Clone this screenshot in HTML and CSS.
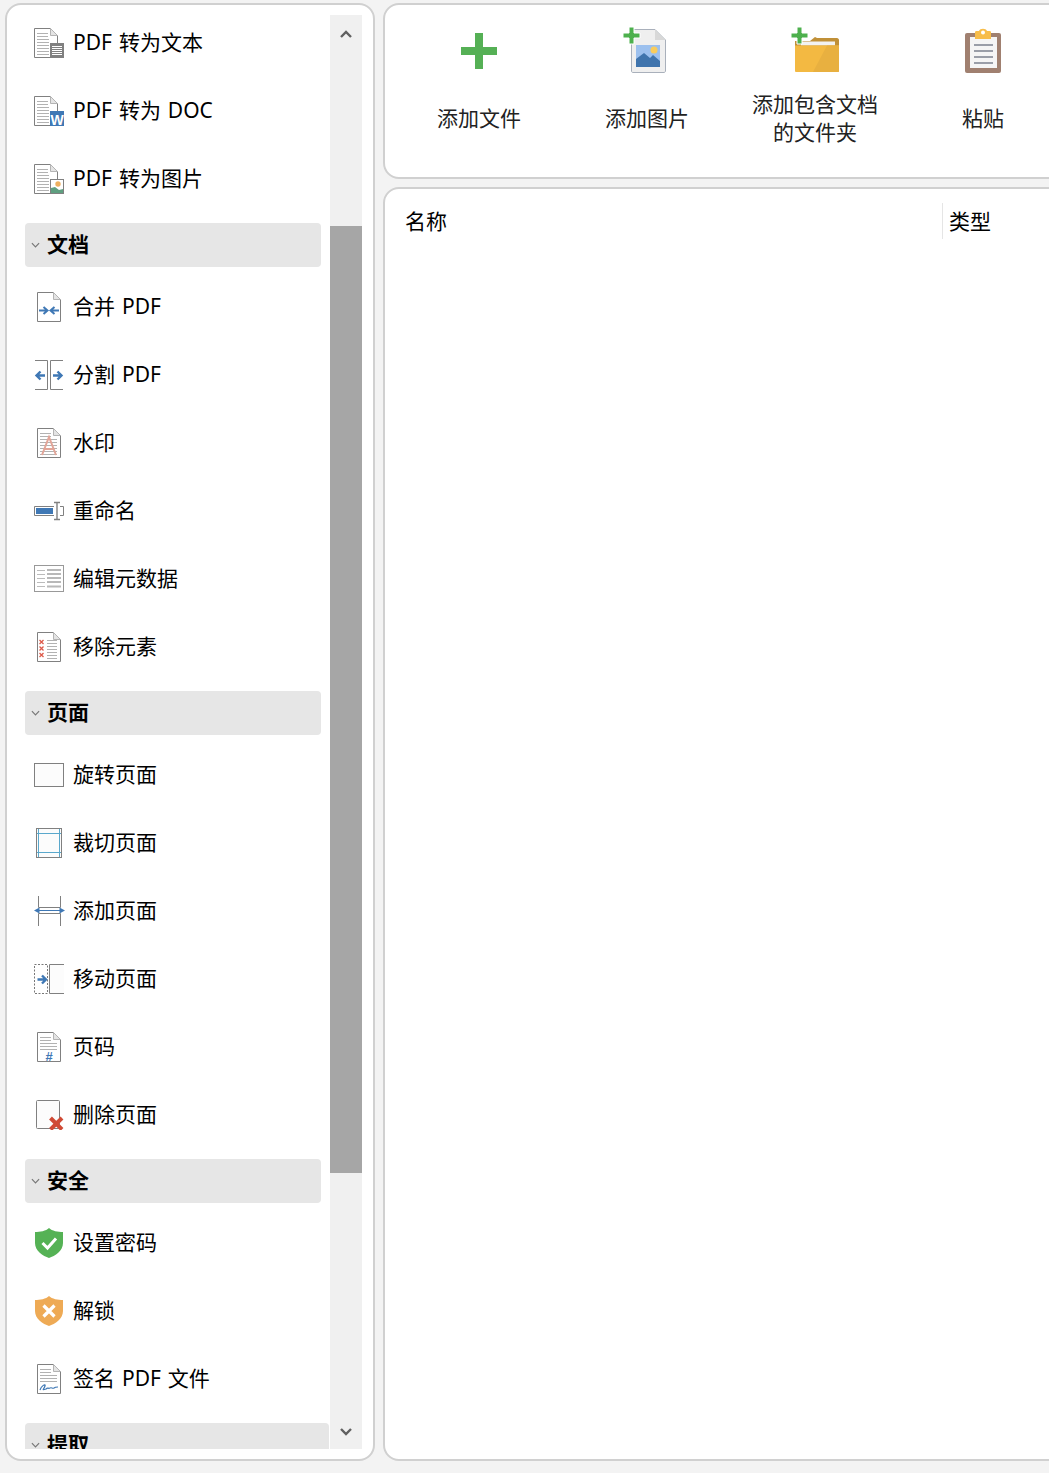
FILE: index.html
```html
<!DOCTYPE html>
<html lang="zh-CN">
<head>
    <meta charset="UTF-8">
    <meta name="viewport" content="width=device-width, initial-scale=1.0">
    <title>PDF 工具</title>
    <link rel="stylesheet" href="styles.css">
</head>
<body>
    <!-- 图标共用部分 -->
    <svg class="icon-defs">
        <defs>
            <g id="doc">
                <path d="M.5 .5H16.5L23.5 7.5V29.5H.5Z" fill="#fff" stroke="#808080"/>
                <path d="M16.5 .5V7.5H23.5Z" fill="#e4e4e4" stroke="#b4b4b4"/>
            </g>
            <path id="doc-lines" d="M3 5.5H14M3 8.5H14M3 11.5H20M3 14.5H20M3 17.5H20M3 20.5H20M3 23.5H20M3 26.5H20" stroke="#b2b2b2" fill="none"/>
            <path id="doc-lines-short" d="M3 5.5H14M3 8.5H14M3 11.5H15M3 14.5H15M3 17.5H15M3 20.5H15M3 23.5H15M3 26.5H15" stroke="#b2b2b2" fill="none"/>
        </defs>
    </svg>

    <!-- 左侧工具列表 -->
    <aside class="side-panel">
        <div class="tool-list">
            <ul class="tools tools-first">
                <li class="tool">
                    <svg class="tool-icon" viewBox="0 0 32 32"><use href="#doc" x="1" y="2"/><use href="#doc-lines-short" x="1" y="2"/><rect x="17" y="17" width="14" height="15" fill="#808080"/><path d="M19 20.500H29M19 22.500H29M19 24.500H29M19 26.500H29M19 28.500H29" stroke="#fff"/></svg>
                    <span>PDF 转为文本</span>
                </li>
                <li class="tool">
                    <svg class="tool-icon" viewBox="0 0 32 32"><use href="#doc" x="1" y="2"/><use href="#doc-lines-short" x="1" y="2"/><rect x="17" y="17" width="14" height="15" fill="#3f78b5"/><text class="badge-w" x="24" y="30.500">W</text></svg>
                    <span>PDF 转为 DOC</span>
                </li>
                <li class="tool">
                    <svg class="tool-icon" viewBox="0 0 32 32"><use href="#doc" x="1" y="2"/><use href="#doc-lines-short" x="1" y="2"/><rect x="17.500" y="17.500" width="13" height="14" fill="#fff" stroke="#808080"/><circle cx="25" cy="22" r="2.700" fill="#eeb060"/><path d="M18 31V26L22 25L26 28L30 27V31Z" fill="#5f9f80"/></svg>
                    <span>PDF 转为图片</span>
                </li>
            </ul>

            <div class="group-title">
                <svg class="chevron" viewBox="0 0 10 6"><path d="M1 1L5 5L9 1" fill="none" stroke="#777" stroke-width="1.300"/></svg>
                <span>文档</span>
            </div>
            <ul class="tools">
                <li class="tool">
                    <svg class="tool-icon" viewBox="0 0 32 32"><use href="#doc" x="4" y="2"/><path d="M6 20.500H14M10.500 17L14.500 20.500L10.500 24M26 20.500H18M21.500 17L17.500 20.500L21.500 24" fill="none" stroke="#3f78b5" stroke-width="2"/></svg>
                    <span>合并 PDF</span>
                </li>
                <li class="tool">
                    <svg class="tool-icon" viewBox="0 0 32 32"><path d="M2 2.500H14.500V31.500H2M30 2.500H17.500V31.500H30" fill="#fff" stroke="#808080"/><path d="M12 17.500H4M7.500 13.500L3.500 17.500L7.500 21.500M20 17.500H28M24.500 13.500L28.500 17.500L24.500 21.500" fill="none" stroke="#3f78b5" stroke-width="2.400"/></svg>
                    <span>分割 PDF</span>
                </li>
                <li class="tool">
                    <svg class="tool-icon" viewBox="0 0 32 32"><use href="#doc" x="4" y="2"/><use href="#doc-lines" x="4" y="2"/><path d="M9 29L16 11L23 29M11.500 23H20.500" fill="none" stroke="#e2a598" stroke-width="2"/></svg>
                    <span>水印</span>
                </li>
                <li class="tool">
                    <svg class="tool-icon" viewBox="0 0 32 32"><path d="M21 12.500H1.500V21.500H21M27 12.500H30.500V21.500H27" fill="#fff" stroke="#808080"/><rect x="3" y="14" width="17" height="6" fill="#3f78b5"/><path d="M21 8.500H27M24 8.500V25.500M21 25.500H27" fill="none" stroke="#808080" stroke-width="1.400"/></svg>
                    <span>重命名</span>
                </li>
                <li class="tool">
                    <svg class="tool-icon" viewBox="0 0 32 32"><rect x="1.500" y="3.500" width="29" height="26" fill="#fff" stroke="#999"/><path d="M4 8.500H12M4 12.500H12M4 16.500H12M4 20.500H12M4 24.500H12" stroke="#bbb"/><path d="M14 8H28M14 12H28M14 16H28M14 20H28M14 24.500H28" stroke="#b8b8b8" stroke-width="2"/></svg>
                    <span>编辑元数据</span>
                </li>
                <li class="tool">
                    <svg class="tool-icon" viewBox="0 0 32 32"><use href="#doc" x="4" y="2"/><path d="M14 10.500H24M14 13.500H24M14 16.500H24M14 19.500H24M14 22.500H24M14 25.500H24M14 28.500H24" stroke="#b2b2b2"/><path d="M6.500 10L10.500 14M10.500 10L6.500 14M6.500 16.500L10.500 20.500M10.500 16.500L6.500 20.500M6.500 23L10.500 27M10.500 23L6.500 27" stroke="#dd5a4a" stroke-width="1.300"/></svg>
                    <span>移除元素</span>
                </li>
            </ul>

            <div class="group-title">
                <svg class="chevron" viewBox="0 0 10 6"><path d="M1 1L5 5L9 1" fill="none" stroke="#777" stroke-width="1.300"/></svg>
                <span>页面</span>
            </div>
            <ul class="tools">
                <li class="tool">
                    <svg class="tool-icon" viewBox="0 0 32 32"><rect x="1.500" y="5.500" width="29" height="23" fill="#fcfcfc" stroke="#808080"/></svg>
                    <span>旋转页面</span>
                </li>
                <li class="tool">
                    <svg class="tool-icon" viewBox="0 0 32 32"><rect x="3.500" y="2.500" width="25" height="29" fill="#fcfcfc" stroke="#808080"/><path d="M5.500 3V31M26.500 3V31M4 7.500H28M4 26.500H28" stroke="#5aa8cc"/></svg>
                    <span>裁切页面</span>
                </li>
                <li class="tool">
                    <svg class="tool-icon" viewBox="0 0 32 32"><path d="M5.500 2V13.500H27.500V2M5.500 32V19.500H27.500V32" fill="none" stroke="#808080"/><path d="M4 16.500H28" stroke="#3f78b5"/><path d="M1 16.500L6.500 13.500V19.500ZM32 16.500L26.500 13.500V19.500Z" fill="#3f78b5"/></svg>
                    <span>添加页面</span>
                </li>
                <li class="tool">
                    <svg class="tool-icon" viewBox="0 0 32 32"><rect x="1.500" y="2.500" width="13" height="29" fill="none" stroke="#777" stroke-dasharray="2 1.500"/><path d="M31 2.500H16.500V31.500H31" fill="#fcfcfc" stroke="#808080"/><path d="M4.500 17.500H12.500M9 13.500L13 17.500L9 21.500" fill="none" stroke="#3f78b5" stroke-width="2.400"/></svg>
                    <span>移动页面</span>
                </li>
                <li class="tool">
                    <svg class="tool-icon" viewBox="0 0 32 32"><use href="#doc" x="4" y="2"/><path d="M7 7.500H18M7 10.500H18M7 13.500H24M7 16.500H24M7 19.500H24" stroke="#b2b2b2"/><text class="badge-hash" x="16" y="30.500">#</text></svg>
                    <span>页码</span>
                </li>
                <li class="tool">
                    <svg class="tool-icon" viewBox="0 0 32 32"><rect x="3.500" y="2.500" width="23" height="28" rx="1" fill="#fcfcfc" stroke="#808080"/><path d="M17.500 20L29 31.500M29 20L17.500 31.500" stroke="#d04a35" stroke-width="4"/></svg>
                    <span>删除页面</span>
                </li>
            </ul>

            <div class="group-title">
                <svg class="chevron" viewBox="0 0 10 6"><path d="M1 1L5 5L9 1" fill="none" stroke="#777" stroke-width="1.300"/></svg>
                <span>安全</span>
            </div>
            <ul class="tools">
                <li class="tool">
                    <svg class="tool-icon" viewBox="0 0 32 32"><path d="M16 2C19 5 25 6 30 6V17C30 25 22 30 16 32C10 30 2 25 2 17V6C7 6 13 5 16 2Z" fill="#55b255"/><path d="M9.500 17L14.500 22L23 12.500" fill="none" stroke="#fff" stroke-width="3"/></svg>
                    <span>设置密码</span>
                </li>
                <li class="tool">
                    <svg class="tool-icon" viewBox="0 0 32 32"><path d="M16 2C19 5 25 6 30 6V17C30 25 22 30 16 32C10 30 2 25 2 17V6C7 6 13 5 16 2Z" fill="#eeaa55"/><path d="M10.500 11.500L21.500 22.500M21.500 11.500L10.500 22.500" fill="none" stroke="#fff" stroke-width="3.200"/></svg>
                    <span>解锁</span>
                </li>
                <li class="tool">
                    <svg class="tool-icon" viewBox="0 0 32 32"><use href="#doc" x="4" y="2"/><path d="M7 7.500H18M7 10.500H18M7 13.500H24M7 16.500H24M7 19.500H24" stroke="#b2b2b2"/><path d="M7 28C8 24 13 21 12 24C11 27 8 29 13 27C15 25 15 27 17 26C19 25 19 27 21 26C22 25 24 25 25 25" fill="none" stroke="#3f78b5" stroke-width="1.200"/></svg>
                    <span>签名 PDF 文件</span>
                </li>
            </ul>

            <div class="group-title group-title-wide">
                <svg class="chevron" viewBox="0 0 10 6"><path d="M1 1L5 5L9 1" fill="none" stroke="#777" stroke-width="1.300"/></svg>
                <span>提取</span>
            </div>
        </div>

        <!-- 滚动条 -->
        <div class="scrollbar">
            <div class="scroll-btn scroll-up">
                <svg viewBox="0 0 12 8"><path d="M1 7L6 2L11 7" fill="none" stroke="#606060" stroke-width="2.400"/></svg>
            </div>
            <div class="scroll-thumb"></div>
            <div class="scroll-btn scroll-down">
                <svg viewBox="0 0 12 8"><path d="M1 1L6 6L11 1" fill="none" stroke="#606060" stroke-width="2.400"/></svg>
            </div>
        </div>
    </aside>

    <main class="main-column">
        <!-- 工具栏 -->
        <section class="panel toolbar">
            <div class="tb-item">
                <svg class="tb-icon" viewBox="0 0 48 48"><path d="M20 6H28V20H42V28H28V42H20V28H6V20H20Z" fill="#55b055"/></svg>
                <div class="tb-label">添加文件</div>
            </div>
            <div class="tb-item">
                <svg class="tb-icon" viewBox="0 0 48 48">
                    <path d="M8.500 2.500H32L42.500 13V44C42.500 45 41.500 45.500 41 45.500H10C9 45.500 8.500 45 8.500 44Z" fill="#efefef" stroke="#a9b0bb"/>
                    <path d="M32 2.500V13H42.500Z" fill="#d8d8d8"/>
                    <rect x="13" y="18" width="24" height="22" fill="#9cc0ee"/>
                    <circle cx="31" cy="23" r="3.500" fill="#f9cc5c"/>
                    <path d="M13 40V32L21 26L27 31L30 28L37 34V40Z" fill="#3f74ad"/>
                    <path d="M6 0H11V6H17V11H11V17H6V11H0V6H6Z" fill="#4db04d" stroke="#fff"/>
                </svg>
                <div class="tb-label">添加图片</div>
            </div>
            <div class="tb-item">
                <svg class="tb-icon" viewBox="0 0 48 48">
                    <path d="M4 14H19L24 10L26 11H46C47 11 48 12 48 13V30H4Z" fill="#c09038"/>
                    <rect x="10" y="14.500" width="34" height="4" fill="#f2f2f2"/>
                    <path d="M4 18.500H48V44C48 45 47 45 46 45H6C5 45 4 45 4 44Z" fill="#f3b942"/>
                    <path d="M22 45L36 18.500H48V44C48 45 47 45 46 45Z" fill="#e8b040"/>
                    <path d="M6 0H11V6H17V11H11V17H6V11H0V6H6Z" fill="#4db04d" stroke="#fff"/>
                </svg>
                <div class="tb-label">添加包含文档<br>的文件夹</div>
            </div>
            <div class="tb-item">
                <svg class="tb-icon" viewBox="0 0 48 48">
                    <rect x="6" y="6" width="36" height="40" rx="2" fill="#a08070"/>
                    <rect x="11" y="10" width="27" height="31" fill="#f5f5f5"/>
                    <path d="M15 18H34M15 24H34M15 30H34M15 36H34" stroke="#9a9ea8" stroke-width="2"/>
                    <path d="M16 5C16 4 17 4 18 4H20C21 1 27 1 28 4H30C31 4 32 4 32 5V12H16Z" fill="#f7bd4a"/>
                    <circle cx="24" cy="5.500" r="2" fill="#fff"/>
                </svg>
                <div class="tb-label">粘贴</div>
            </div>
        </section>

        <!-- 文件列表 -->
        <section class="panel file-panel">
            <div class="file-head">
                <div class="col-name">名称</div>
                <div class="col-type">类型</div>
            </div>
        </section>
    </main>
</body>
</html>
```

FILE: styles.css
```css
* {
    margin: 0;
    padding: 0;
    box-sizing: border-box;
}
html, body {
    height: 100%;
    overflow: hidden;
}
body {
    font-family: "Noto Sans", "Noto Sans CJK SC", sans-serif;
    font-size: 21px;
    word-spacing: 1.5px;
    color: #000;
    background-color: #f3f3f3;
    display: flex;
    gap: 8px;
    padding: 3px 0 12px 5px;
}
.icon-defs {
    display: none;
}

/* 左侧 */
.side-panel {
    width: 370px;
    flex-shrink: 0;
    background: white;
    border: 2px solid #d0d0d0;
    border-radius: 16px;
    padding: 10px 11px 10px 0;
    display: flex;
}
.tool-list {
    width: 323px;
    padding-left: 18px;
    overflow: hidden;
}
.tools {
    list-style: none;
}
.tools-first {
    margin-top: -7px;
}
.tool {
    height: 68px;
    display: flex;
    align-items: center;
    gap: 8px;
    padding-left: 8px;
    line-height: 1;
}
.tool-icon {
    width: 32px;
    height: 32px;
    flex-shrink: 0;
}
.group-title {
    width: 296px;
    height: 44px;
    margin-top: 11px;
    margin-bottom: 5px;
    padding: 0 0 2px 6px;
    background-color: #e6e6e6;
    border-radius: 4px;
    display: flex;
    align-items: center;
    gap: 7px;
    font-weight: 700;
    line-height: 1;
}
.group-title-wide {
    width: 304px;
}
.chevron {
    width: 9px;
    height: 6px;
    flex-shrink: 0;
    margin-top: 2px;
}
.badge-w {
    font-family: "Liberation Sans", sans-serif;
    font-size: 14px;
    font-weight: 700;
    fill: #fff;
    text-anchor: middle;
}
.badge-hash {
    font-family: "Liberation Sans", sans-serif;
    font-size: 13px;
    font-weight: 700;
    fill: #3f78b5;
    text-anchor: middle;
}

/* 滚动条 */
.scrollbar {
    width: 32px;
    background-color: #f0f0f0;
    display: flex;
    flex-direction: column;
}
.scroll-btn {
    display: flex;
    align-items: center;
    justify-content: center;
}
.scroll-btn svg {
    width: 12px;
    height: 8px;
}
.scroll-up {
    height: 38px;
}
.scroll-thumb {
    height: 947px;
    margin-top: 173px;
    background-color: #a6a6a6;
}
.scroll-down {
    height: 34px;
    margin-top: auto;
}

/* 右侧 */
.main-column {
    width: 700px;
    flex-shrink: 0;
    display: flex;
    flex-direction: column;
    gap: 8px;
}
.panel {
    background: white;
    border: 2px solid #d0d0d0;
    border-radius: 16px;
}
.toolbar {
    height: 176px;
    display: flex;
    padding: 22px 0 0 10px;
}
.tb-item {
    width: 168px;
    flex-shrink: 0;
    display: flex;
    flex-direction: column;
    align-items: center;
    color: #222;
}
.tb-icon {
    width: 48px;
    height: 48px;
}
.tb-label {
    height: 56px;
    margin-top: 15px;
    display: flex;
    align-items: center;
    text-align: center;
    line-height: 28px;
}
.file-panel {
    flex: 1;
}
.file-head {
    display: flex;
    align-items: center;
    height: 36px;
    margin-top: 14px;
    line-height: 36px;
}
.col-name {
    width: 557px;
    padding-left: 20px;
}
.col-type {
    flex: 1;
    padding-left: 6px;
    border-left: 1px solid #e5e5e5;
}
```
